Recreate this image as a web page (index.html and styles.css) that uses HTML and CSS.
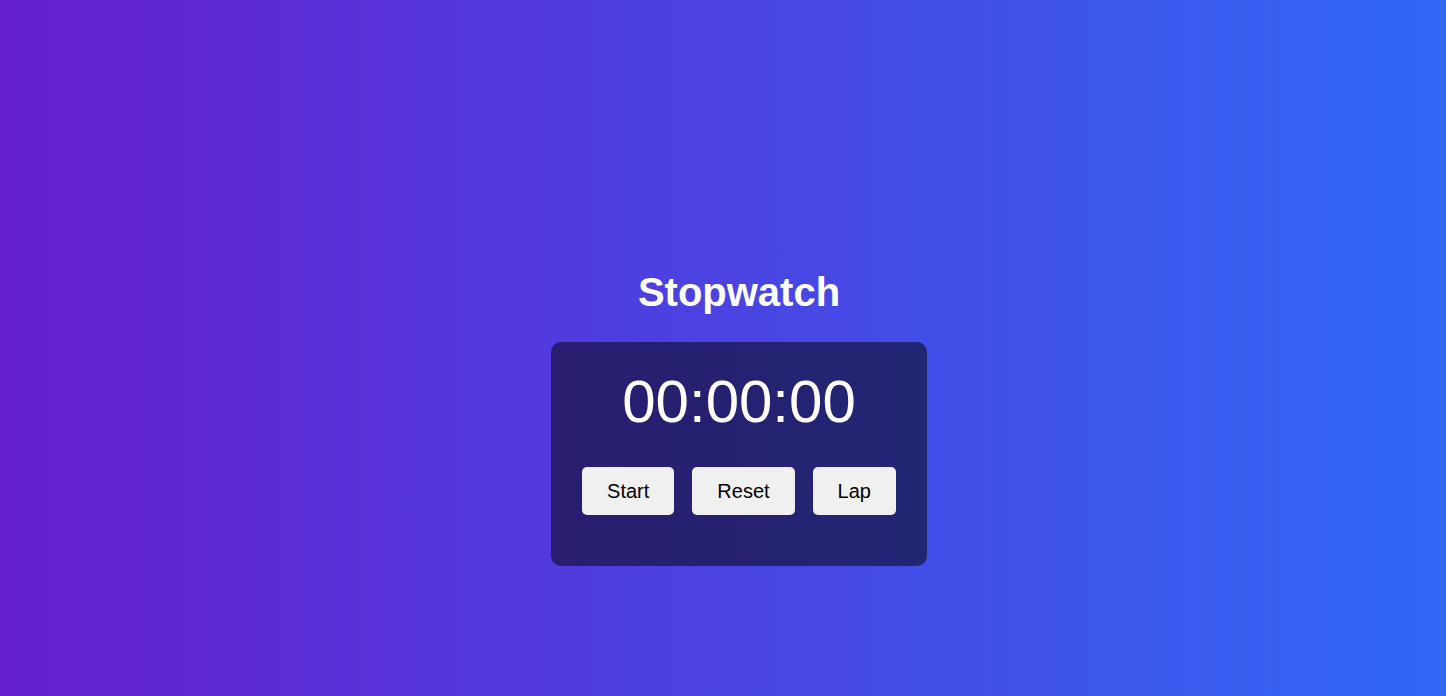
FILE: index.html
```html
<!DOCTYPE html>
<html lang="en">
<head>
<meta charset="utf-8">
<title>Stopwatch</title>
<link rel="stylesheet" href="styles.css">
</head>
<body>
<main class="page">
  <h1 class="title">Stopwatch</h1>
  <section class="card">
    <div class="time">00:00:00</div>
    <div class="controls">
      <button class="btn">Start</button>
      <button class="btn">Reset</button>
      <button class="btn">Lap</button>
    </div>
  </section>
</main>
</body>
</html>
```

FILE: styles.css
```css
html, body {
  margin: 0;
  padding: 0;
  height: 100%;
}
body {
  background: linear-gradient(to right, #651ecf, #3068f5);
  font-family: "Liberation Sans", Arial, sans-serif;
  color: #fff;
}
.page {
  display: flex;
  flex-direction: column;
  align-items: center;
  padding: 269px 0 0 32px;
  box-sizing: border-box;
  height: 100%;
}
.title {
  margin: 0 0 27px;
  font-size: 40px;
  line-height: 46px;
  font-weight: bold;
  color: #fff;
}
.card {
  background: rgba(0, 0, 0, 0.5);
  border-radius: 10px;
  padding: 25px 31px 51px;
  display: flex;
  flex-direction: column;
  align-items: center;
}
.time {
  font-size: 60px;
  line-height: 69px;
  margin-bottom: 31px;
  color: #fff;
}
.controls {
  display: flex;
  gap: 18px;
}
.btn {
  font-family: "Liberation Sans", Arial, sans-serif;
  font-size: 20px;
  line-height: 24px;
  padding: 12px 25px;
  border: none;
  border-radius: 5px;
  background: #f0f0f0;
  color: #000;
  cursor: pointer;
}
```
